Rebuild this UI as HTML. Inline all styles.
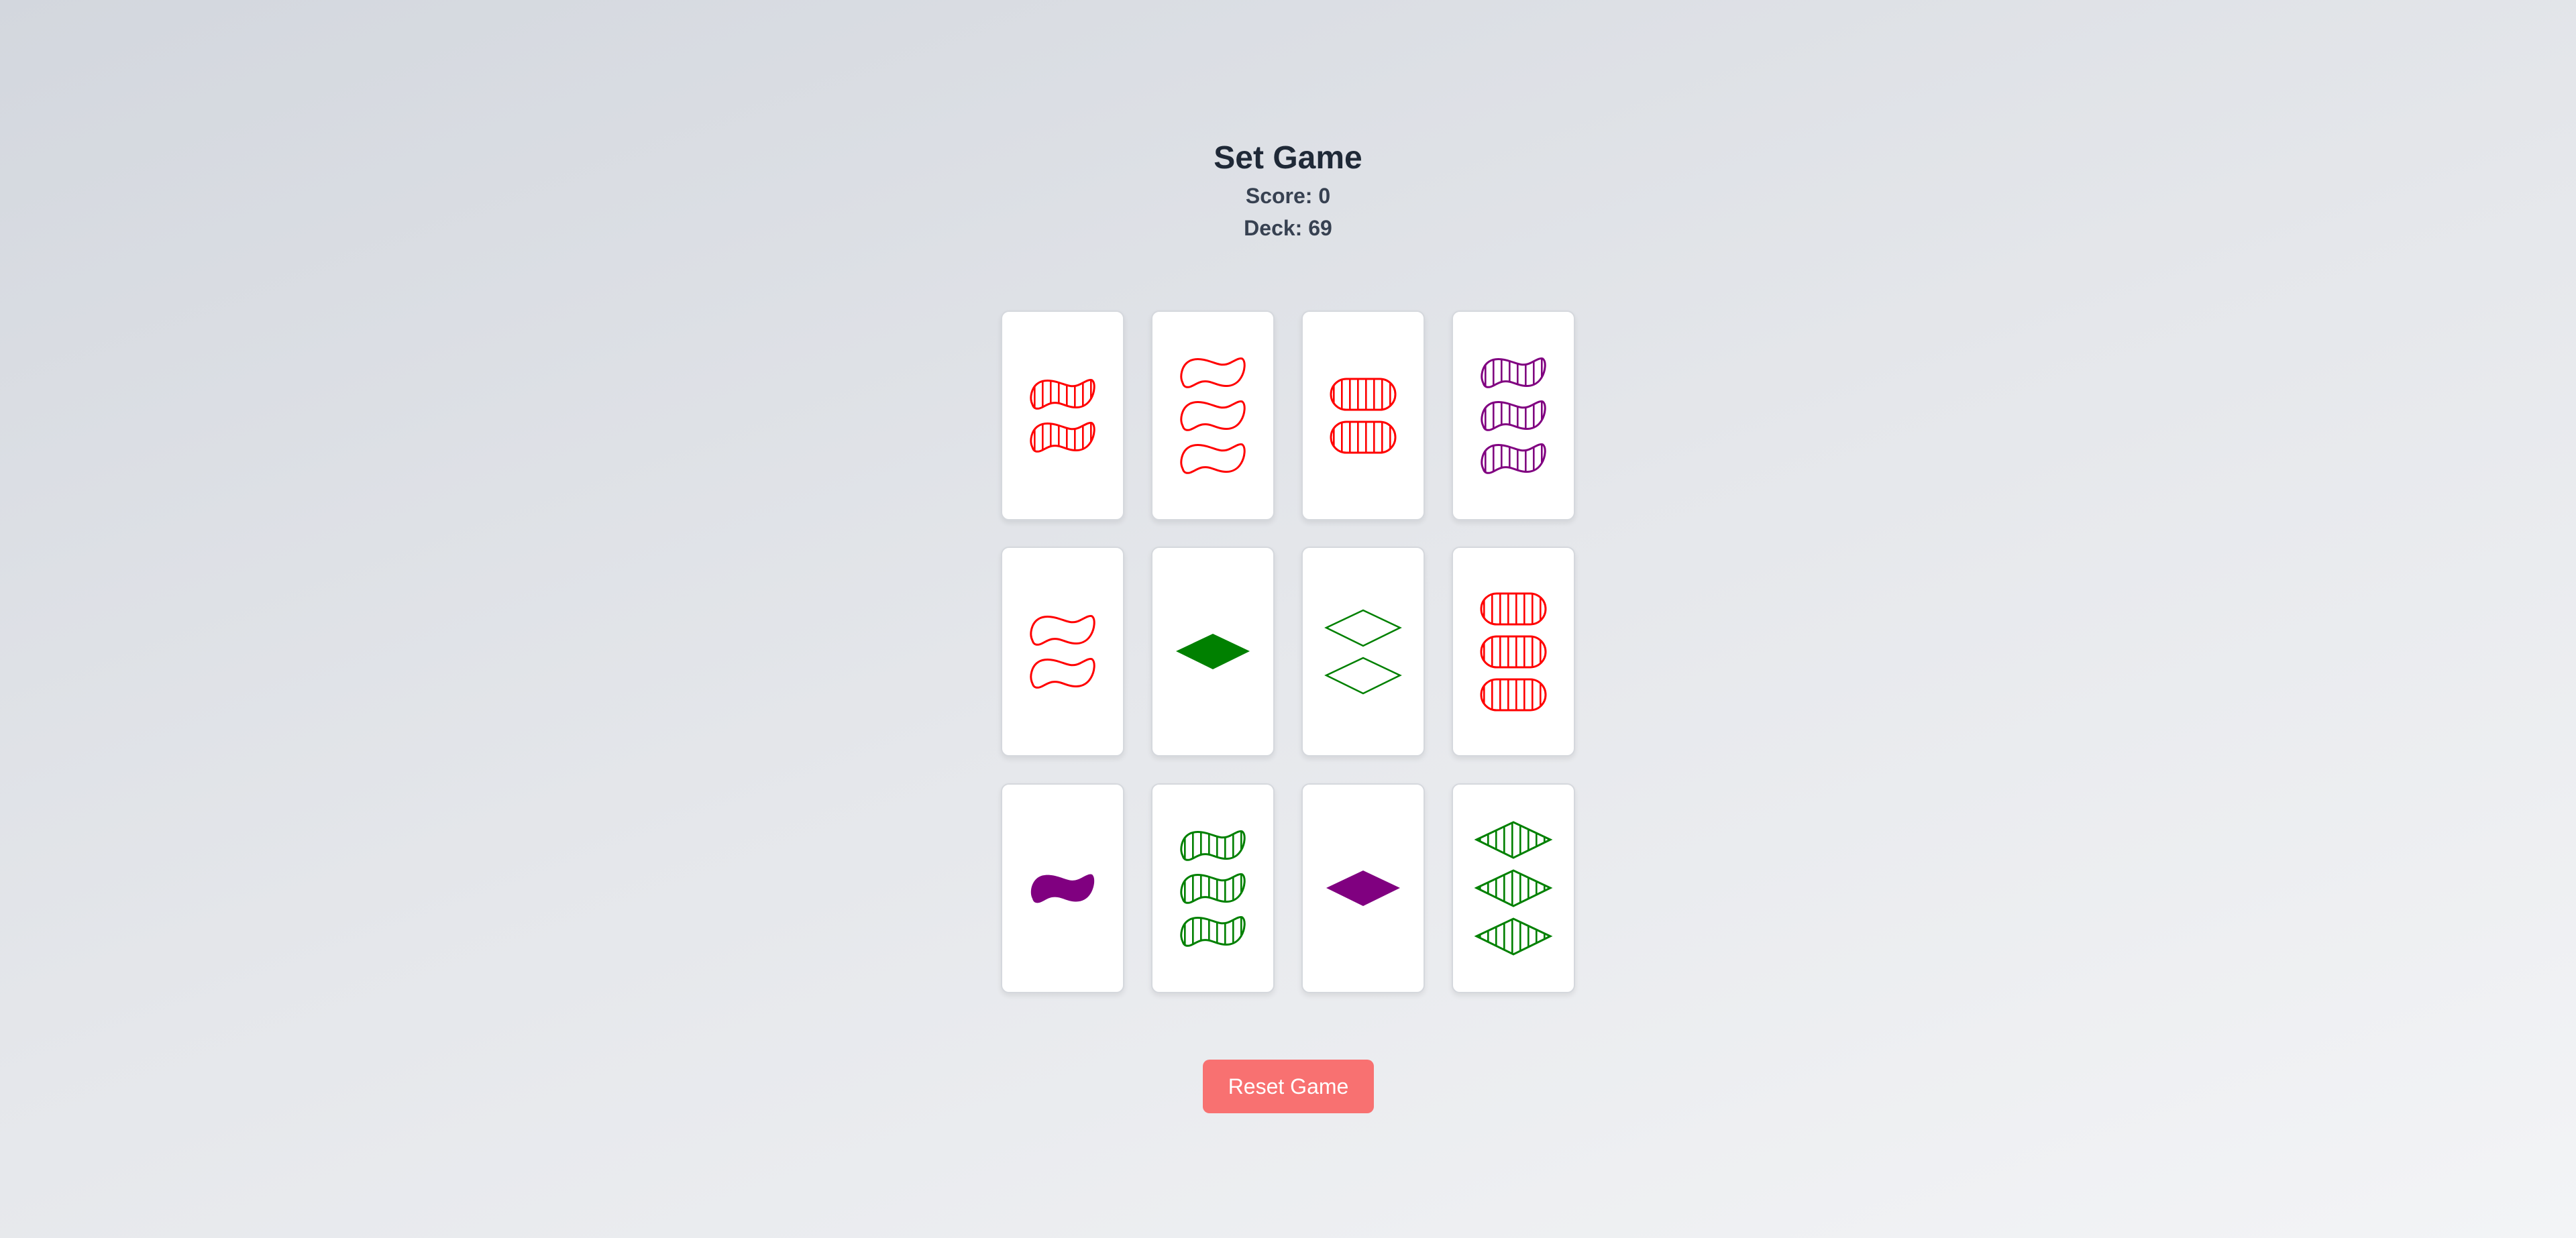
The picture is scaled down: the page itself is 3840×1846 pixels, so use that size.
<!DOCTYPE html>
<html><head><meta charset="utf-8">
<style>
html,body{margin:0;padding:0;}
body{width:3840px;height:1846px;overflow:hidden;background:linear-gradient(160deg,#d3d7de 0%,#e5e7eb 50%,#f3f4f6 100%);font-family:"Liberation Sans",sans-serif;position:relative;}
h1{position:absolute;left:0;width:3840px;top:206px;margin:0;text-align:center;font-size:48px;font-weight:bold;color:#1f2937;line-height:60px;}
.info{position:absolute;left:0;width:3840px;text-align:center;font-size:32px;font-weight:bold;color:#374151;line-height:40px;}
.card{position:absolute;width:180px;height:309px;background:#fff;border:2px solid #d5d8dd;border-radius:12px;box-shadow:0 4px 8px rgba(0,0,0,0.08);display:flex;flex-direction:column;align-items:center;justify-content:center;gap:19px;}
.card.dia{gap:16px;}
svg.s{display:block;overflow:visible;}
.btn{position:absolute;left:1793px;top:1580px;width:255px;height:80px;background:#f87171;border-radius:10px;color:#fff;font-size:32px;text-align:center;line-height:80px;}
</style></head><body>
<svg width="0" height="0" style="position:absolute">
<defs>
<pattern id="pr" patternUnits="userSpaceOnUse" width="12" height="100"><rect x="5" y="0" width="2.6" height="100" fill="#ff0000"/></pattern>
<pattern id="pp" patternUnits="userSpaceOnUse" width="12" height="100"><rect x="5" y="0" width="2.6" height="100" fill="#800080"/></pattern>
<pattern id="pg" patternUnits="userSpaceOnUse" width="12" height="100"><rect x="5" y="0" width="2.6" height="100" fill="#008000"/></pattern>
<path id="sq" d="M3 38 C-2 28 2 12 12 6 C20 1 32 2 44 6 C54 9 62 14 74 8 C82 4 88 0 92 2 C97 6 96 20 90 30 C84 40 74 44 62 42 C50 40 44 34 32 36 C22 38 16 46 8 44 C5 43 4 41 3 38 Z"/>
<rect id="ov" x="2" y="2" width="96" height="46" rx="23" ry="23"/>
<polygon id="di" points="1,27 56,1 111,27 56,54"/>
</defs></svg>

<h1>Set Game</h1>
<div class="info" style="top:272px">Score: 0</div>
<div class="info" style="top:320px">Deck: 69</div>

<!-- Row 1 -->
<div class="card" style="left:1492px;top:463px">
<svg class="s" width="96" height="45" viewBox="0 0 96 45"><use href="#sq" fill="url(#pr)" stroke="#ff0000" stroke-width="3"/></svg>
<svg class="s" width="96" height="45" viewBox="0 0 96 45"><use href="#sq" fill="url(#pr)" stroke="#ff0000" stroke-width="3"/></svg>
</div>
<div class="card" style="left:1716px;top:463px">
<svg class="s" width="96" height="45" viewBox="0 0 96 45"><use href="#sq" fill="none" stroke="#ff0000" stroke-width="3"/></svg>
<svg class="s" width="96" height="45" viewBox="0 0 96 45"><use href="#sq" fill="none" stroke="#ff0000" stroke-width="3"/></svg>
<svg class="s" width="96" height="45" viewBox="0 0 96 45"><use href="#sq" fill="none" stroke="#ff0000" stroke-width="3"/></svg>
</div>
<div class="card" style="left:1940px;top:463px;gap:14px">
<svg class="s" width="100" height="50" viewBox="0 0 100 50"><use href="#ov" fill="url(#pr)" stroke="#ff0000" stroke-width="3"/></svg>
<svg class="s" width="100" height="50" viewBox="0 0 100 50"><use href="#ov" fill="url(#pr)" stroke="#ff0000" stroke-width="3"/></svg>
</div>
<div class="card" style="left:2164px;top:463px">
<svg class="s" width="96" height="45" viewBox="0 0 96 45"><use href="#sq" fill="url(#pp)" stroke="#800080" stroke-width="3"/></svg>
<svg class="s" width="96" height="45" viewBox="0 0 96 45"><use href="#sq" fill="url(#pp)" stroke="#800080" stroke-width="3"/></svg>
<svg class="s" width="96" height="45" viewBox="0 0 96 45"><use href="#sq" fill="url(#pp)" stroke="#800080" stroke-width="3"/></svg>
</div>

<!-- Row 2 -->
<div class="card" style="left:1492px;top:815px">
<svg class="s" width="96" height="45" viewBox="0 0 96 45"><use href="#sq" fill="none" stroke="#ff0000" stroke-width="3"/></svg>
<svg class="s" width="96" height="45" viewBox="0 0 96 45"><use href="#sq" fill="none" stroke="#ff0000" stroke-width="3"/></svg>
</div>
<div class="card dia" style="left:1716px;top:815px">
<svg class="s" width="112" height="55" viewBox="0 0 112 55"><use href="#di" fill="#008000"/></svg>
</div>
<div class="card dia" style="left:1940px;top:815px">
<svg class="s" width="112" height="55" viewBox="0 0 112 55"><use href="#di" fill="none" stroke="#008000" stroke-width="2.5"/></svg>
<svg class="s" width="112" height="55" viewBox="0 0 112 55"><use href="#di" fill="none" stroke="#008000" stroke-width="2.5"/></svg>
</div>
<div class="card" style="left:2164px;top:815px;gap:14px">
<svg class="s" width="100" height="50" viewBox="0 0 100 50"><use href="#ov" fill="url(#pr)" stroke="#ff0000" stroke-width="3"/></svg>
<svg class="s" width="100" height="50" viewBox="0 0 100 50"><use href="#ov" fill="url(#pr)" stroke="#ff0000" stroke-width="3"/></svg>
<svg class="s" width="100" height="50" viewBox="0 0 100 50"><use href="#ov" fill="url(#pr)" stroke="#ff0000" stroke-width="3"/></svg>
</div>

<!-- Row 3 -->
<div class="card" style="left:1492px;top:1168px">
<svg class="s" width="96" height="45" viewBox="0 0 96 45"><use href="#sq" fill="#800080"/></svg>
</div>
<div class="card" style="left:1716px;top:1168px">
<svg class="s" width="96" height="45" viewBox="0 0 96 45"><use href="#sq" fill="url(#pg)" stroke="#008000" stroke-width="3"/></svg>
<svg class="s" width="96" height="45" viewBox="0 0 96 45"><use href="#sq" fill="url(#pg)" stroke="#008000" stroke-width="3"/></svg>
<svg class="s" width="96" height="45" viewBox="0 0 96 45"><use href="#sq" fill="url(#pg)" stroke="#008000" stroke-width="3"/></svg>
</div>
<div class="card dia" style="left:1940px;top:1168px">
<svg class="s" width="112" height="55" viewBox="0 0 112 55"><use href="#di" fill="#800080"/></svg>
</div>
<div class="card dia" style="left:2164px;top:1168px;gap:17px">
<svg class="s" width="112" height="55" viewBox="0 0 112 55"><use href="#di" fill="url(#pg)" stroke="#008000" stroke-width="3"/></svg>
<svg class="s" width="112" height="55" viewBox="0 0 112 55"><use href="#di" fill="url(#pg)" stroke="#008000" stroke-width="3"/></svg>
<svg class="s" width="112" height="55" viewBox="0 0 112 55"><use href="#di" fill="url(#pg)" stroke="#008000" stroke-width="3"/></svg>
</div>

<div class="btn">Reset Game</div>
</body></html>
